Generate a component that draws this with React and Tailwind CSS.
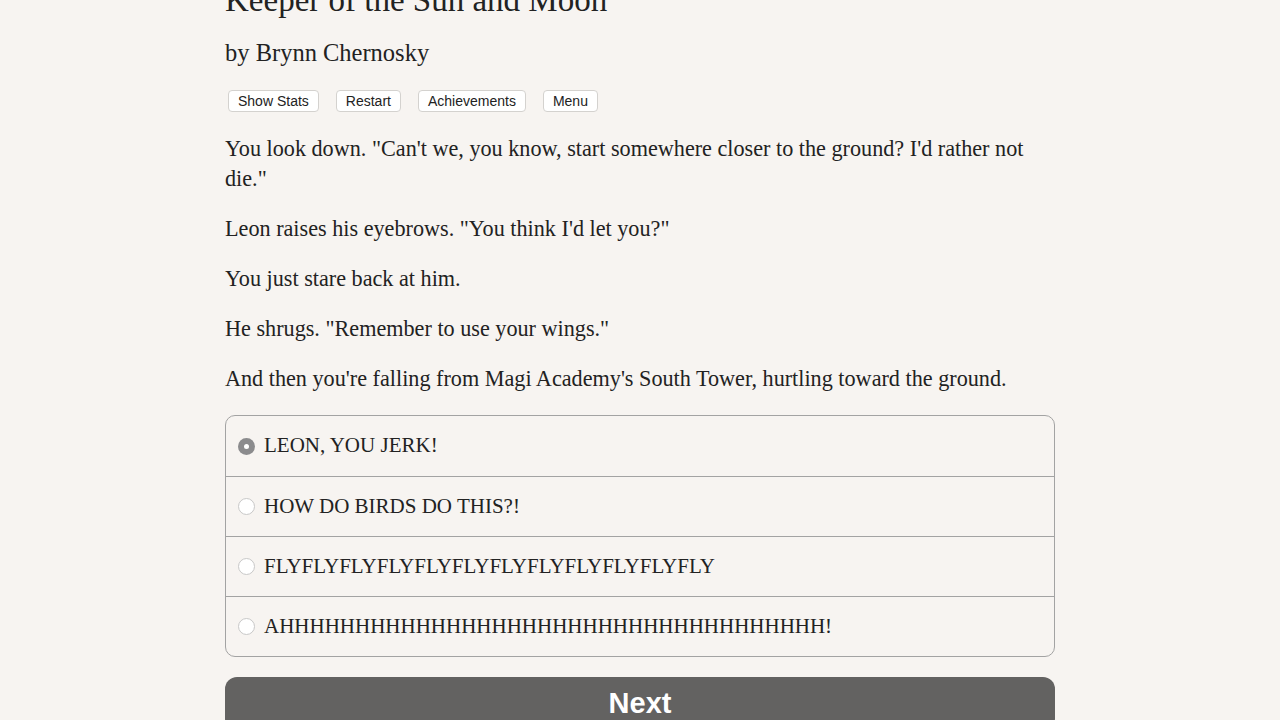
import React from 'react'

const choices = [
  "LEON, YOU JERK!",
  "HOW DO BIRDS DO THIS?!",
  "FLYFLYFLYFLYFLYFLYFLYFLYFLYFLYFLYFLY",
  "AHHHHHHHHHHHHHHHHHHHHHHHHHHHHHHHHHHHH!",
]

const paragraphs = [
  `You look down. "Can't we, you know, start somewhere closer to the ground? I'd rather not die."`,
  `Leon raises his eyebrows. "You think I'd let you?"`,
  `You just stare back at him.`,
  `He shrugs. "Remember to use your wings."`,
  `And then you're falling from Magi Academy's South Tower, hurtling toward the ground.`,
]

const App = () => {
  const [selected, setSelected] = React.useState(0)

  return (
    <div className="min-h-[720px] bg-[#f7f4f1] overflow-hidden text-[#222] font-['Liberation_Serif',serif]">
      <div className="w-[830px] mx-auto -mt-[22px]">
        <h1 className="text-[33px] leading-[44px] font-normal">Keeper of the Sun and Moon</h1>
        <h2 className="text-[24.5px] leading-[34px] mt-[14px]">by Brynn Chernosky</h2>

        <div className="flex gap-[17px] mt-[20px] pl-[3px] font-['Liberation_Sans',sans-serif] text-[14px]">
          {["Show Stats", "Restart", "Achievements", "Menu"].map((b) => (
            <button
              key={b}
              className="bg-white border border-[#d4d2cf] rounded-[4px] h-[22px] px-[9px] leading-[20px] text-[#222]"
            >
              {b}
            </button>
          ))}
        </div>

        <div className="mt-[22px] mb-[21px] text-[22.2px] leading-[30px]">
          {paragraphs.map((p, i) => (
            <p key={i} className={i < paragraphs.length - 1 ? 'mb-[20px]' : ''}>{p}</p>
          ))}
        </div>

        <div className="border border-[#a3a3a3] rounded-[10px] text-[21px]">
          {choices.map((c, i) => (
            <label
              key={i}
              onClick={() => setSelected(i)}
              className={`flex items-center h-[60px] pl-[12px] cursor-pointer ${i > 0 ? 'border-t border-[#a3a3a3]' : ''}`}
            >
              {selected === i ? (
                <span className="w-[17px] h-[17px] rounded-full bg-[#8b8b8d] flex items-center justify-center">
                  <span className="w-[5px] h-[5px] rounded-full bg-white"></span>
                </span>
              ) : (
                <span className="w-[17px] h-[17px] rounded-full bg-white border border-[#c8c8c8]"></span>
              )}
              <span className="ml-[9px]">{c}</span>
            </label>
          ))}
        </div>

        <button className="mt-[20px] w-full h-[54px] rounded-[12px] bg-[#636261] text-white font-['Liberation_Sans',sans-serif] font-bold text-[29px]">
          Next
        </button>
      </div>
    </div>
  )
}

export default App
